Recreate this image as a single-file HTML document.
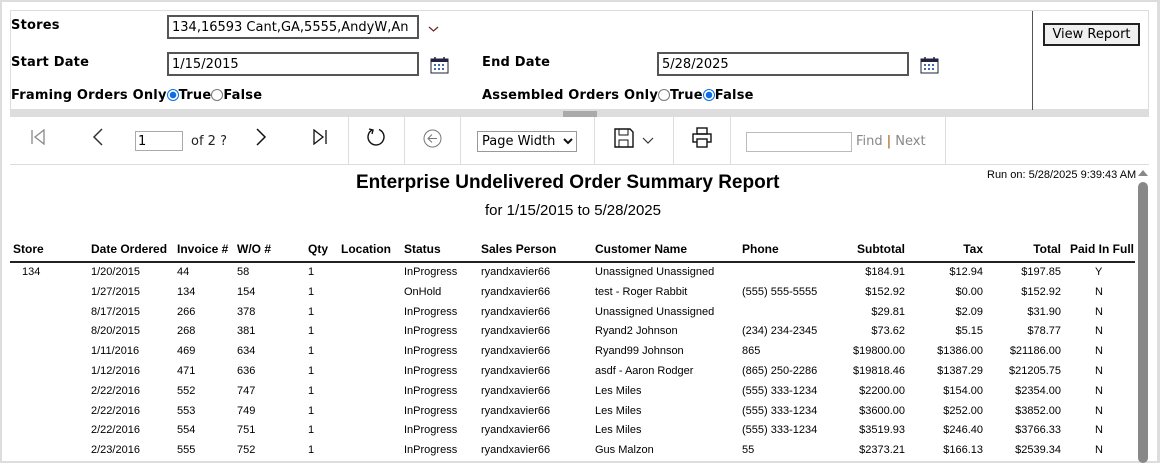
<!DOCTYPE html>
<html><head><style>
*{margin:0;padding:0;box-sizing:border-box}
body{width:1160px;height:463px;overflow:hidden;background:#fff;font-family:"DejaVu Sans",Verdana,sans-serif;position:relative}
.a{position:absolute;white-space:nowrap}
.lbl{font-weight:bold;font-size:13px;color:#000}
.inp{position:absolute;border:2px solid #555;background:#fff;font-size:13px;padding:2px 3px;height:24px;line-height:17px}
.sep{position:absolute;top:117px;width:1px;height:47px;background:#ddd}
.t{font-family:"Liberation Sans",Arial,sans-serif;font-size:11px;position:absolute;white-space:nowrap}
.h{font-weight:bold;font-size:12px}
.r{text-align:right}
.radio{display:inline-block;width:12px;height:12px;border-radius:50%;border:1px solid #777;vertical-align:-2px;background:#fff}
.radio.on{border-color:#0a6ee8;background:radial-gradient(circle,#0a6ee8 3px,#fff 3.5px)}
</style></head><body>
<div class="a" style="left:0;top:0;width:1160px;height:463px;border:2px solid #ddd;border-right:3px solid #ddd"></div>
<div class="a" style="left:10px;top:10px;width:1139px;height:100px;border:1px solid #ddd"></div>
<div class="a" style="left:1032px;top:11px;width:1px;height:99px;background:#555"></div>
<div class="a lbl" style="left:11px;top:18px;letter-spacing:0.2px">Stores</div>
<div class="inp" style="left:167px;top:15px;width:252px">134,16593 Cant,GA,5555,AndyW,An</div>
<svg class="a" style="left:428px;top:25px" width="11" height="8"><path d="M1 2 L5.5 6 L10 2" stroke="#702020" fill="none" stroke-width="1.2"/></svg>
<div class="a lbl" style="left:11px;top:55px;letter-spacing:0.2px">Start Date</div>
<div class="inp" style="left:167px;top:52px;width:252px">1/15/2015</div>
<svg class="a" style="left:430px;top:56px" width="19" height="18"><rect x="1" y="3" width="17" height="14" fill="#fff" stroke="#223" /><rect x="1" y="3" width="17" height="3" fill="#224"/><line x1="5" y1="1" x2="5" y2="5" stroke="#223" stroke-width="1.5"/><line x1="14" y1="1" x2="14" y2="5" stroke="#223" stroke-width="1.5"/><g fill="#4466aa"><rect x="4" y="8" width="2" height="2"/><rect x="8" y="8" width="2" height="2"/><rect x="12" y="8" width="2" height="2"/><rect x="4" y="12" width="2" height="2"/><rect x="8" y="12" width="2" height="2"/><rect x="12" y="12" width="2" height="2"/></g></svg>
<div class="a lbl" style="left:482px;top:55px;letter-spacing:0.2px">End Date</div>
<div class="inp" style="left:657px;top:52px;width:252px">5/28/2025</div>
<svg class="a" style="left:920px;top:56px" width="19" height="18"><rect x="1" y="3" width="17" height="14" fill="#fff" stroke="#223" /><rect x="1" y="3" width="17" height="3" fill="#224"/><line x1="5" y1="1" x2="5" y2="5" stroke="#223" stroke-width="1.5"/><line x1="14" y1="1" x2="14" y2="5" stroke="#223" stroke-width="1.5"/><g fill="#4466aa"><rect x="4" y="8" width="2" height="2"/><rect x="8" y="8" width="2" height="2"/><rect x="12" y="8" width="2" height="2"/><rect x="4" y="12" width="2" height="2"/><rect x="8" y="12" width="2" height="2"/><rect x="12" y="12" width="2" height="2"/></g></svg>
<div class="a lbl" style="left:11px;top:88px;letter-spacing:0.2px">Framing Orders Only<span class="radio on"></span>True<span class="radio"></span>False</div>
<div class="a lbl" style="left:482px;top:88px;letter-spacing:0.2px">Assembled Orders Only<span class="radio"></span>True<span class="radio on"></span>False</div>
<div class="a" style="left:1043px;top:23px;width:97px;height:23px;border:2px solid #222;background:#f0f0f0;font-size:13px;text-align:center;line-height:19px">View Report</div>
<div class="a" style="left:10px;top:110px;width:1139px;height:7px;background:#ddd"></div>
<div class="a" style="left:563px;top:111px;width:34px;height:6px;background:#aaa"></div>
<div class="a" style="left:10px;top:164px;width:1139px;height:1px;background:#ddd"></div>
<div class="sep" style="left:348px"></div><div class="sep" style="left:404px"></div><div class="sep" style="left:460px"></div><div class="sep" style="left:594px"></div><div class="sep" style="left:673px"></div><div class="sep" style="left:730px"></div><div class="sep" style="left:945px"></div>
<svg class="a" style="left:30px;top:129px" width="16" height="16"><path d="M2 1V15M14 1L5 8L14 15Z" stroke="#888" fill="none" stroke-width="1.3"/></svg>
<svg class="a" style="left:92px;top:128px" width="12" height="18"><path d="M10 1L2 9L10 17" stroke="#333" fill="none" stroke-width="1.5"/></svg>
<div class="a" style="left:135px;top:131px;width:48px;height:20px;border:1px solid #aaa;font-size:13px;padding-left:2px;line-height:20px">1</div>
<div class="a" style="left:191px;top:134px;font-size:13px;color:#222">of 2 ?</div>
<svg class="a" style="left:255px;top:128px" width="12" height="18"><path d="M2 1L10 9L2 17" stroke="#111" fill="none" stroke-width="1.5"/></svg>
<svg class="a" style="left:312px;top:129px" width="16" height="16"><path d="M2 1L11 8L2 15ZM14 1V15" stroke="#111" fill="none" stroke-width="1.3"/></svg>
<svg class="a" style="left:366px;top:126px" width="20" height="22"><path d="M6 4A8 8 0 1 0 13 3.5" stroke="#111" fill="none" stroke-width="1.4"/><path d="M3 3L7 4L6 8" stroke="#111" fill="none" stroke-width="1.4"/></svg>
<svg class="a" style="left:423px;top:129px" width="19" height="19"><circle cx="9.5" cy="9.5" r="8.5" stroke="#777" fill="none"/><path d="M14 9.5H5M9 5.5L5 9.5L9 13.5" stroke="#777" fill="none"/></svg>
<div class="a" style="left:477px;top:131px;width:100px;height:21px;border:1px solid #999;font-size:13px;padding-left:4px;line-height:19px">Page Width</div>
<svg class="a" style="left:563px;top:138px" width="10" height="7"><path d="M1 1L5 5L9 1" stroke="#111" fill="none" stroke-width="2"/></svg>
<svg class="a" style="left:614px;top:128px" width="20" height="20"><path d="M1 1H16L19 4V19H1Z" stroke="#111" fill="none" stroke-width="1.4"/><rect x="5" y="1" width="9" height="6" stroke="#111" fill="none"/><rect x="5" y="12" width="9" height="7" stroke="#111" fill="none"/></svg>
<svg class="a" style="left:642px;top:137px" width="12" height="8"><path d="M1 1L6 6L11 1" stroke="#333" fill="none" stroke-width="1.2"/></svg>
<svg class="a" style="left:692px;top:127px" width="20" height="21"><rect x="5" y="1" width="10" height="6" stroke="#111" fill="none" stroke-width="1.4"/><rect x="1" y="7" width="18" height="8" stroke="#111" fill="none" stroke-width="1.4"/><rect x="5" y="12" width="10" height="8" stroke="#111" fill="#fff" stroke-width="1.4"/></svg>
<div class="a" style="left:746px;top:132px;width:106px;height:20px;border:1px solid #bbb"></div>
<div class="a" style="left:856px;top:134px;font-size:13px;color:#888">Find <span style="color:#a05000">|</span> Next</div>
<div class="a" style="left:1138px;top:182px;width:10px;height:281px;background:#888;border-radius:5px"></div>
<svg class="a" style="left:1138px;top:169px" width="10" height="8"><path d="M0 7L5 1L10 7Z" fill="#888"/></svg>
<div class="t" style="left:987px;top:169px;font-size:11px">Run on: 5/28/2025 9:39:43 AM</div>
<div class="t" style="left:356px;top:172px;font-size:19px;font-weight:bold">Enterprise Undelivered Order Summary Report</div>
<div class="t" style="left:485px;top:202px;font-size:15px">for 1/15/2015 to 5/28/2025</div>
<div class="a" style="left:10px;top:261px;width:1125px;height:2px;background:#222"></div>
<div class="t h" style="left:13px;top:242px">Store</div>
<div class="t h" style="left:91px;top:242px">Date Ordered</div>
<div class="t h" style="left:177px;top:242px">Invoice #</div>
<div class="t h" style="left:237px;top:242px">W/O #</div>
<div class="t h" style="left:308px;top:242px">Qty</div>
<div class="t h" style="left:341px;top:242px">Location</div>
<div class="t h" style="left:404px;top:242px">Status</div>
<div class="t h" style="left:481px;top:242px">Sales Person</div>
<div class="t h" style="left:595px;top:242px">Customer Name</div>
<div class="t h" style="left:742px;top:242px">Phone</div>
<div class="t h r" style="right:255px;top:242px">Subtotal</div>
<div class="t h r" style="right:177px;top:242px">Tax</div>
<div class="t h r" style="right:99px;top:242px">Total</div>
<div class="t h" style="left:1070px;top:242px">Paid In Full</div>
<div id="rows"></div>
<script>
var d=[["134","1/20/2015","44","58","InProgress","Unassigned Unassigned","","$184.91","$12.94","$197.85","Y"],
["","1/27/2015","134","154","OnHold","test - Roger Rabbit","(555) 555-5555","$152.92","$0.00","$152.92","N"],
["","8/17/2015","266","378","InProgress","Unassigned Unassigned","","$29.81","$2.09","$31.90","N"],
["","8/20/2015","268","381","InProgress","Ryand2 Johnson","(234) 234-2345","$73.62","$5.15","$78.77","N"],
["","1/11/2016","469","634","InProgress","Ryand99 Johnson","865","$19800.00","$1386.00","$21186.00","N"],
["","1/12/2016","471","636","InProgress","asdf - Aaron Rodger","(865) 250-2286","$19818.46","$1387.29","$21205.75","N"],
["","2/22/2016","552","747","InProgress","Les Miles","(555) 333-1234","$2200.00","$154.00","$2354.00","N"],
["","2/22/2016","553","749","InProgress","Les Miles","(555) 333-1234","$3600.00","$252.00","$3852.00","N"],
["","2/22/2016","554","751","InProgress","Les Miles","(555) 333-1234","$3519.93","$246.40","$3766.33","N"],
["","2/23/2016","555","752","InProgress","Gus Malzon","55","$2373.21","$166.13","$2539.34","N"]];
var h="";d.forEach(function(r,i){var y=266+i*19.8;
function c(x,s){h+='<div class="t" style="left:'+x+'px;top:'+y+'px">'+s+'</div>'}
function rr(x,s){h+='<div class="t r" style="right:'+x+'px;top:'+y+'px">'+s+'</div>'}
c(22,r[0]);c(91,r[1]);c(177,r[2]);c(237,r[3]);c(308,"1");c(404,r[4]);c(481,"ryandxavier66");c(595,r[5]);c(742,r[6]);
rr(255,r[7]);rr(177,r[8]);rr(99,r[9]);c(1095,r[10]);});
document.getElementById("rows").innerHTML=h;
</script>
</body></html>
